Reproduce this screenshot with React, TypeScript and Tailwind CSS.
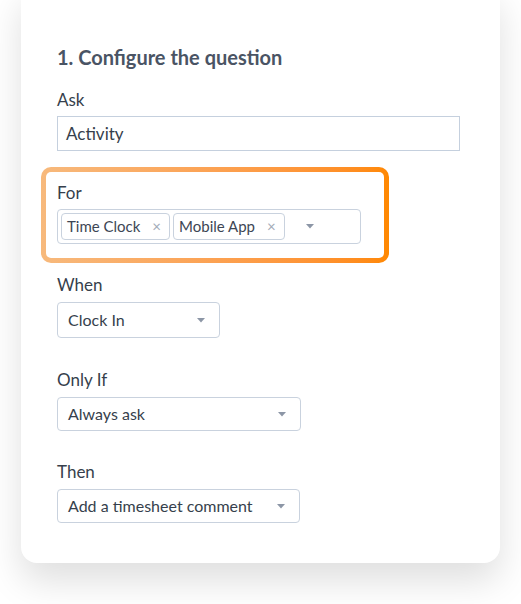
import React from "react";

const Caret = () => (
  <svg width="8" height="5" viewBox="0 0 8 5" className="shrink-0">
    <path d="M0 0 L8 0 L4 4.5 Z" fill="#8c96a6" />
  </svg>
);

const Label = ({ children, className = "" }: { children: React.ReactNode; className?: string }) => (
  <div className={`text-[17px] leading-[20px] text-[#363f4c] ${className}`}>{children}</div>
);

const Select = ({ value, width, height }: { value: string; width: string; height: string }) => (
  <div
    className={`mt-[7px] flex items-center justify-between rounded-[4px] border border-[#c9d2de] bg-white pl-[10px] pr-[14px] ${width} ${height}`}
  >
    <span className="text-[16px] text-[#363f4c]">{value}</span>
    <Caret />
  </div>
);

const Tag = ({ text }: { text: string }) => (
  <div className="flex h-[27px] items-center rounded-[4px] border border-[#c9d2de] pl-[5px] pr-[8px] text-[15px] text-[#3d4654]">
    <span>{text}</span>
    <span className="ml-[12px] text-[15px] leading-none text-[#a3abb8]">×</span>
  </div>
);

export default function App() {
  return (
    <div className="h-[604px] w-[521px] overflow-hidden bg-white pl-[21px]" style={{ fontFamily: "Lato, 'Noto Sans', sans-serif" }}>
      <div className="-mt-[16px] w-[479px] rounded-[16px] bg-white pl-[36px] pt-[61px] pb-[40px] shadow-[0_18px_36px_rgba(0,0,0,0.13)]">
        <h1 className="text-[20px] font-bold leading-[24px] text-[#4a5464]">1. Configure the question</h1>

        <Label className="mt-[21px]">Ask</Label>
        <div className="mt-[6px] flex h-[35px] w-[403px] items-center border border-[#c5d0de] px-[8px] text-[17px] text-[#363f4c]">
          Activity
        </div>

        <div className="-ml-[16px] mt-[16px] w-[348px] rounded-[10px] bg-gradient-to-r from-[#f7b97c] to-[#ff8800] p-[5px]">
          <div className="rounded-[5px] bg-white pl-[11px] pt-[11px] pb-[14px]">
            <Label>For</Label>
            <div className="mt-[6px] flex h-[35px] w-[304px] items-center gap-[3px] rounded-[4px] border border-[#c9d2de] pl-[3px]">
              <Tag text="Time Clock" />
              <Tag text="Mobile App" />
              <div className="ml-[18px]">
                <Caret />
              </div>
            </div>
          </div>
        </div>

        <Label className="mt-[12px]">When</Label>
        <Select value="Clock In" width="w-[163px]" height="h-[36px]" />

        <Label className="mt-[32px]">Only If</Label>
        <Select value="Always ask" width="w-[244px]" height="h-[34px]" />

        <Label className="mt-[31px]">Then</Label>
        <Select value="Add a timesheet comment" width="w-[243px]" height="h-[34px]" />
      </div>
    </div>
  );
}
